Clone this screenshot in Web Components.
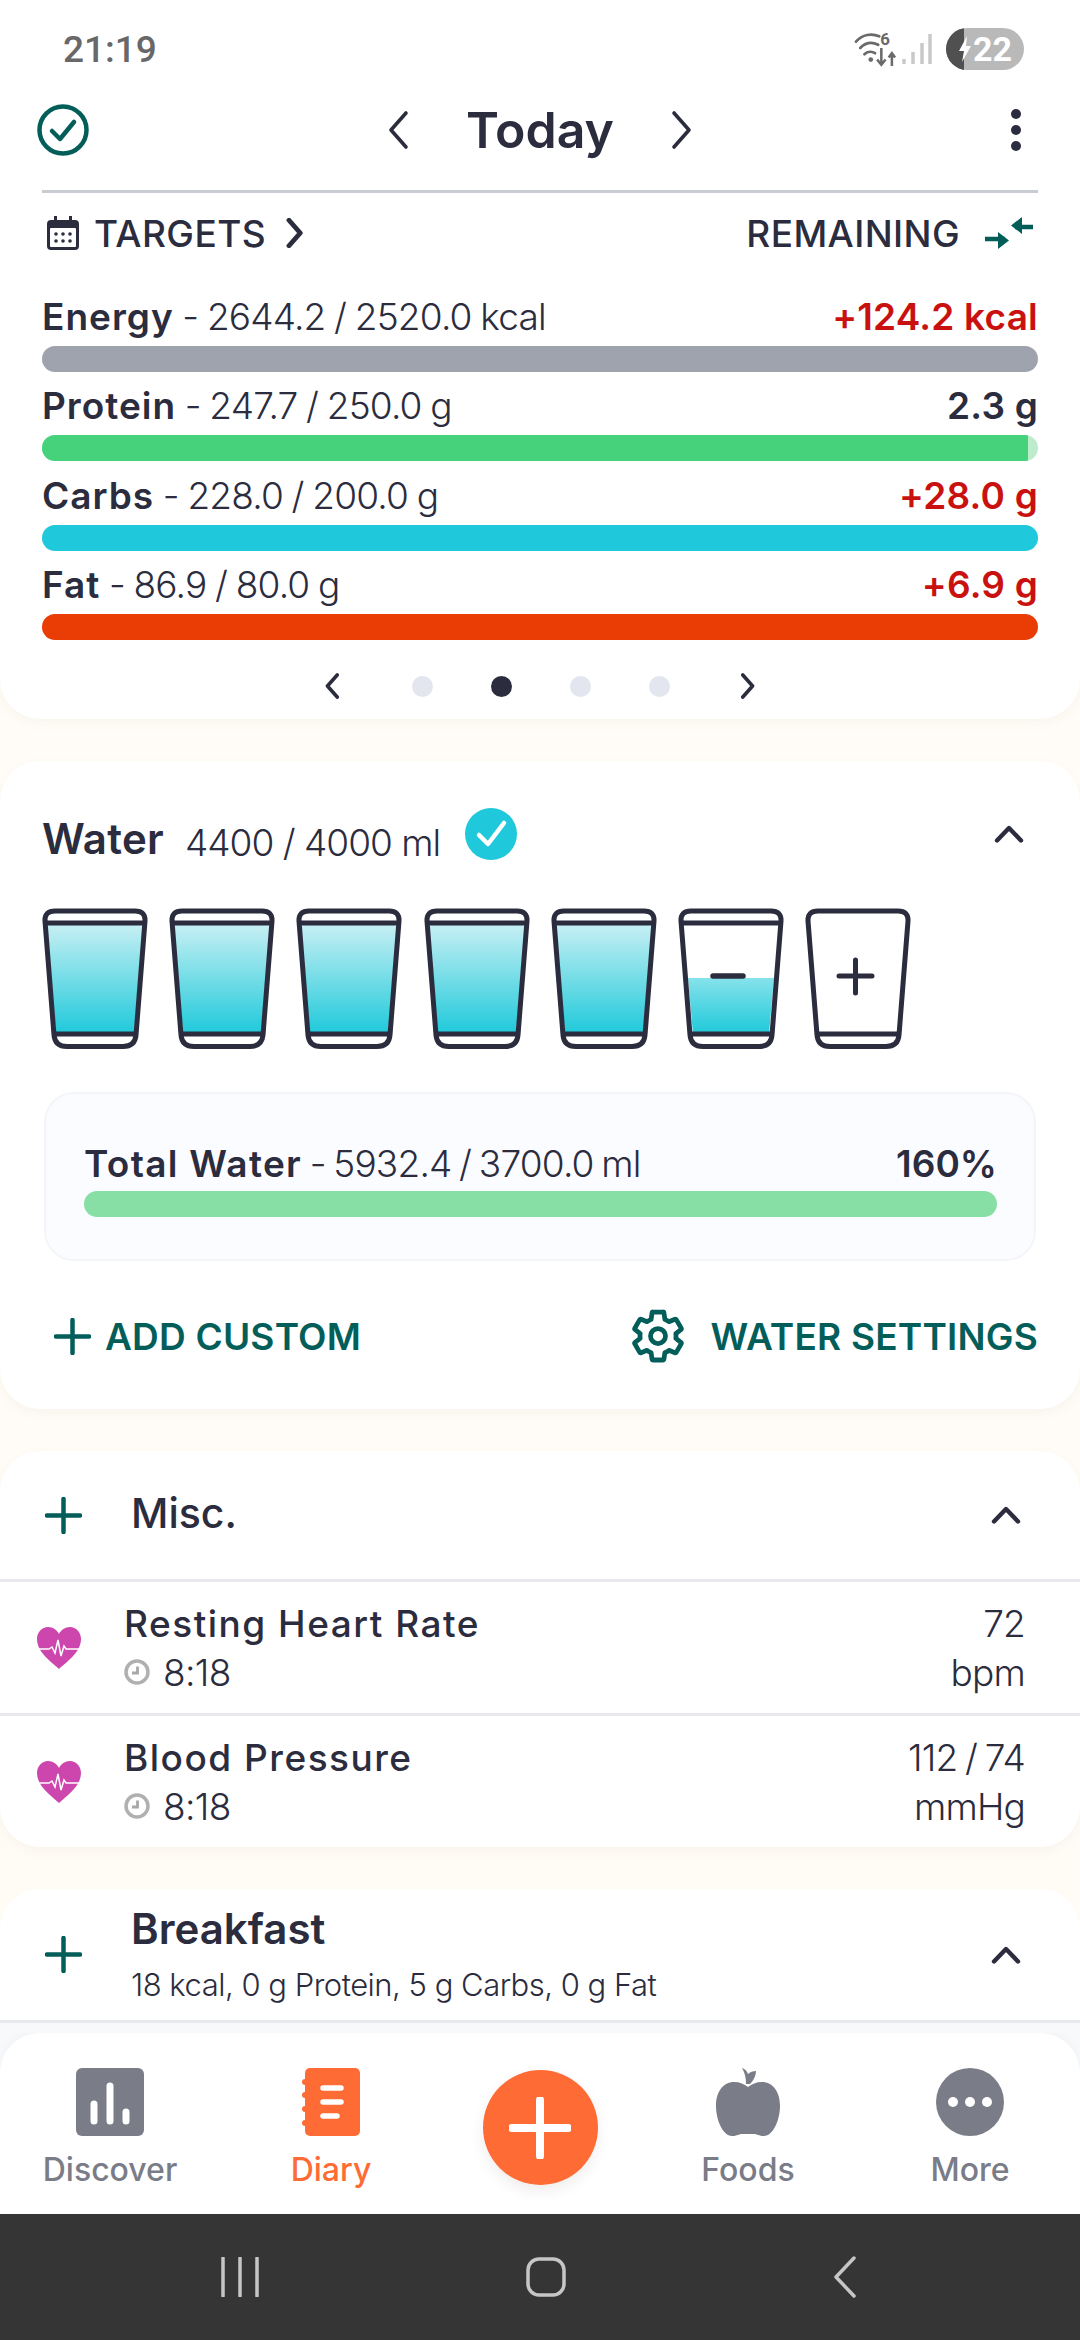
<!DOCTYPE html>
<html>
<head>
<meta charset="utf-8">
<title>Diary</title>
<style>
  html, body { margin: 0; height: 100%; overflow: hidden; }
  body { width: 1080px; height: 2340px; font-family: Inter, "Noto Sans", sans-serif; color: #2b2c3e; background: #f8f9fb; }
  app-main { height: 2033px; }
</style>
</head>
<body>
<app-main>
  <top-card>
    <status-bar></status-bar>
    <day-header></day-header>
    <targets-bar></targets-bar>
    <macro-row color="#9fa3ae" over><span slot="name">Energy</span><span slot="amount">2644.2 / 2520.0 kcal</span><span slot="left">+124.2 kcal</span></macro-row>
    <macro-row color="#46d27b" track="#bdeccd" pct="99"><span slot="name">Protein</span><span slot="amount">247.7 / 250.0 g</span><span slot="left">2.3 g</span></macro-row>
    <macro-row color="#1fc8da" over><span slot="name">Carbs</span><span slot="amount">228.0 / 200.0 g</span><span slot="left">+28.0 g</span></macro-row>
    <macro-row color="#ea3c05" over><span slot="name">Fat</span><span slot="amount">86.9 / 80.0 g</span><span slot="left">+6.9 g</span></macro-row>
    <page-dots></page-dots>
  </top-card>

  <water-card>
    <water-glass level="full"></water-glass>
    <water-glass level="full"></water-glass>
    <water-glass level="full"></water-glass>
    <water-glass level="full"></water-glass>
    <water-glass level="full"></water-glass>
    <water-glass level="half"></water-glass>
    <water-glass level="empty"></water-glass>
  </water-card>

  <diary-section title="Misc.">
    <diary-row time="8:18" value="72" unit="bpm">Resting Heart Rate</diary-row>
    <diary-row time="8:18" value="112 / 74" unit="mmHg">Blood Pressure</diary-row>
  </diary-section>

  <diary-section title="Breakfast" summary="18 kcal, 0 g Protein, 5 g Carbs, 0 g Fat"></diary-section>
</app-main>

<bottom-nav></bottom-nav>
<system-nav></system-nav>

<script>
const ICONS = {
  circleCheck: '<svg viewBox="0 0 52 52"><circle cx="26" cy="26" r="23.5" fill="none" stroke="#035e5a" stroke-width="4.5"/><path d="M15 27l8 8 14-17" fill="none" stroke="#035e5a" stroke-width="4.5" stroke-linecap="round" stroke-linejoin="round"/></svg>',
  left: '<svg viewBox="0 0 24 40"><path d="M20 3L5 20l15 17" fill="none" stroke="currentColor" style="stroke-width:var(--sw,3.6)" stroke-linecap="round" stroke-linejoin="round"/></svg>',
  right: '<svg viewBox="0 0 24 40"><path d="M4 3l15 17L4 37" fill="none" stroke="currentColor" style="stroke-width:var(--sw,3.6)" stroke-linecap="round" stroke-linejoin="round"/></svg>',
  up: '<svg viewBox="0 0 30 18"><path d="M3 15.5L15 3l12 12.5" fill="none" stroke="currentColor" stroke-width="4.4" stroke-linecap="round" stroke-linejoin="round"/></svg>',
  kebab: '<svg viewBox="0 0 12 44"><circle cx="6" cy="6" r="5"/><circle cx="6" cy="22" r="5"/><circle cx="6" cy="38" r="5"/></svg>',
  calendar: '<svg viewBox="0 0 32 34"><path fill="#2b2c3e" d="M7 0h3v4h12V0h3v4h3a4 4 0 0 1 4 4v22a4 4 0 0 1-4 4H4a4 4 0 0 1-4-4V8a4 4 0 0 1 4-4h3z"/><rect x="3" y="12" width="26" height="19" rx="1" fill="#fff"/><g fill="#2b2c3e"><circle cx="9" cy="18" r="1.8"/><circle cx="16" cy="18" r="1.8"/><circle cx="23" cy="18" r="1.8"/><circle cx="9" cy="25" r="1.8"/><circle cx="16" cy="25" r="1.8"/><circle cx="23" cy="25" r="1.8"/></g></svg>',
  swap: '<svg viewBox="0 0 48 32"><path fill="none" stroke="#035e5a" stroke-width="4.5" d="M48 10H30M0 22h20"/><path fill="#035e5a" d="M37 0v17l-11-8.500zM13 15v17l11-8.500z"/></svg>',
  badge: '<svg viewBox="0 0 52 52"><circle cx="26" cy="26" r="26" fill="#1fc8da"/><path d="M14 27l9 9 16-21" fill="none" stroke="#fff" stroke-width="4.500" stroke-linecap="round" stroke-linejoin="round"/></svg>',
  plus: '<svg viewBox="0 0 37 37"><path d="M18.500 2v33M2 18.500h33" fill="none" stroke="#035e5a" stroke-width="4.500" stroke-linecap="round"/></svg>',
  gear: '<svg viewBox="0 0 24 24"><path fill="none" stroke="#035e5a" stroke-width="1.900" stroke-linejoin="round" d="M19.140 12.940c.04-.3.060-.61.060-.94 0-.32-.02-.64-.07-.94l2.030-1.580a.49.49 0 0 0 .12-.61l-1.920-3.320a.49.49 0 0 0-.59-.22l-2.390.96a7 7 0 0 0-1.620-.94l-.36-2.540a.48.48 0 0 0-.48-.41h-3.840a.47.47 0 0 0-.47.41l-.36 2.540a7.400 7.400 0 0 0-1.620.94l-2.390-.96a.49.49 0 0 0-.59.22L2.740 8.870a.47.47 0 0 0 .12.61l2.030 1.580c-.05.3-.09.63-.09.94s.02.64.07.94l-2.030 1.580a.49.49 0 0 0-.12.61l1.920 3.320c.12.22.37.29.59.22l2.390-.96c.5.38 1.030.7 1.620.94l.36 2.540c.05.24.24.41.48.41h3.840c.24 0 .44-.17.47-.41l.36-2.540a7 7 0 0 0 1.620-.94l2.390.96c.22.08.47 0 .59-.22l1.920-3.320a.49.49 0 0 0-.12-.61z"/><circle cx="12" cy="12" r="3" fill="none" stroke="#035e5a" stroke-width="1.900"/></svg>',
  heart: '<svg viewBox="0 0 44 42"><path fill="#cc46ad" d="M22 42C16 36 0 26 0 12 0 5 5 0 11 0c5 0 9 3 11 7 2-4 6-7 11-7 6 0 11 5 11 12 0 14-16 24-22 30z"/><path fill="none" stroke="#fff" stroke-width="1.500" d="M2 22h10l3-2 3 6 3-13 3 16 3-10 2 3h13"/></svg>',
  clock: '<svg viewBox="0 0 26 26"><circle cx="13" cy="13" r="11" fill="none" stroke="#b0b0b0" stroke-width="3.500"/><path d="M13.500 7.500V14H8" fill="none" stroke="#a8a8a8" stroke-width="2.800"/></svg>',
  discover: '<svg viewBox="0 0 68 68"><rect width="68" height="68" rx="6" fill="#7a7c87"/><g stroke="#fff" stroke-width="7" stroke-linecap="round"><path d="M18 36v17M34 18v35M50 44v9"/></g></svg>',
  diary: '<svg viewBox="0 0 58 68"><rect x="3" width="55" height="68" rx="5" fill="#ff6b35"/><g fill="#ff6b35"><circle cx="3" cy="14" r="3"/><circle cx="3" cy="27" r="3"/><circle cx="3" cy="41" r="3"/><circle cx="3" cy="55" r="3"/></g><g stroke="#fff" stroke-width="5.500" stroke-linecap="round"><path d="M21 20h18M21 34h18M21 48h14"/></g></svg>',
  apple: '<svg viewBox="0 0 64 68"><path fill="#7a7c87" d="M32 19c-4-3-8-5-14-5C7 14 0 24 0 38c0 14 7 30 16 30 5 0 7-2 10-2h12c3 0 5 2 10 2 9 0 16-16 16-30 0-14-7-24-18-24-6 0-10 2-14 5z"/><path fill="#7a7c87" d="M26 0c3 1 5 3 6 6 2-2 5-3 8-3 0 5-3 10-6 13h-4c0-6-1-11-4-16z"/></svg>',
  more: '<svg viewBox="0 0 68 68"><circle cx="34" cy="34" r="34" fill="#7a7c87"/><g fill="#fff"><circle cx="17" cy="34" r="5"/><circle cx="34" cy="34" r="5"/><circle cx="51" cy="34" r="5"/></g></svg>',
  fab: '<svg viewBox="0 0 62 62"><path d="M31 3v56M3 31h56" fill="none" stroke="#fff" stroke-width="8" stroke-linecap="round"/></svg>'
};

class AppIcon extends HTMLElement {
  constructor() {
    super();
    this.attachShadow({ mode: 'open' });
    const w = this.getAttribute('w');
    const h = this.getAttribute('h') || w;
    this.shadowRoot.innerHTML = `<style>
      :host { display: block; flex: none; width: ${w}px; height: ${h}px; fill: currentColor; }
      svg { display: block; width: 100%; height: 100%; }
    </style>${ICONS[this.getAttribute('name')]}`;
  }
}
customElements.define('app-icon', AppIcon);

class AppMain extends HTMLElement {
  constructor() {
    super();
    this.attachShadow({ mode: 'open' });
    this.shadowRoot.innerHTML = `<style>
      :host { display: flex; flex-direction: column; gap: 42px; overflow: hidden; background: linear-gradient(#fffdf8, #fffcf6); }
    </style><slot></slot>`;
  }
}
customElements.define('app-main', AppMain);

class TopCard extends HTMLElement {
  constructor() {
    super();
    this.attachShadow({ mode: 'open' });
    this.shadowRoot.innerHTML = `<style>
      :host { display: block; flex: none; height: 719px; box-sizing: border-box; background: #fff; border-radius: 0 0 40px 40px; box-shadow: 0 4px 12px rgba(120,100,60,.05); }
    </style><slot></slot>`;
  }
}
customElements.define('top-card', TopCard);

class StatusBar extends HTMLElement {
  constructor() {
    super();
    this.attachShadow({ mode: 'open' });
    this.shadowRoot.innerHTML = `<style>
      :host { display: flex; align-items: center; height: 98px; padding: 0 56px 0 63px; box-sizing: border-box; }
      .time { font: 500 37px Roboto, sans-serif; color: #686868; flex: 1; }
      .icons { display: flex; align-items: center; }
      .pill { display: flex; align-items: center; width: 78px; height: 42px; border-radius: 21px; overflow: hidden; background: #b9b9b9; color: #fff; font: 700 34px Roboto, sans-serif; margin-left: 13px; }
      .bolt { width: 18px; height: 42px; background: #505050; flex: none; display: flex; align-items: center; justify-content: flex-end; }
      .num { margin-left: 9px; }
    </style>
    <div class="time">21:19</div>
    <div class="icons">
      <svg width="44" height="38" viewBox="0 0 40 36">
        <g fill="none" stroke="#6a6a6a" stroke-width="2.600" stroke-linecap="round"><path d="M2 11C8 4 17 3 24 6M6 17c5-5 11-6 17-3M10 23c3-3 7-3 10-1"/></g>
        <circle cx="16" cy="28" r="2.200" fill="#6a6a6a"/>
        <text x="25" y="14" font-family="Roboto" font-weight="700" font-size="16" fill="#6a6a6a">6</text>
        <path d="M26 17v15M22 28l4 5 4-5M36 34V22M33 26l3-4 3 4" fill="none" stroke="#6a6a6a" stroke-width="2.400"/>
      </svg>
      <svg width="32" height="32" viewBox="0 0 32 32" style="margin-left:4px"><g stroke="#c9c9c9" stroke-width="3.500"><path d="M3 26v5M12 19v12M21 10v21M29 1v30"/></g></svg>
      <div class="pill"><div class="bolt"><svg width="14" height="26" viewBox="0 0 14 26" style="margin-right:-8px"><path d="M9 0L1 15h5l-2 11 9-16H8z" fill="#fff"/></svg></div><span class="num">22</span></div>
    </div>`;
  }
}
customElements.define('status-bar', StatusBar);

class DayHeader extends HTMLElement {
  constructor() {
    super();
    this.attachShadow({ mode: 'open' });
    this.shadowRoot.innerHTML = `<style>
      :host { display: block; }
      .row { display: grid; grid-template-columns: 1fr auto 1fr; align-items: center; height: 64px; padding: 0 37px; }
      .center { display: flex; align-items: center; gap: 55px; }
      .kebab { justify-self: end; margin-right: 21px; }
      .title { font-size: 50px; font-weight: 600; width: 150px; text-align: center; white-space: nowrap; }
      hr { border: 0; margin: 28px 42px 0; height: 3px; background: #c9ccd3; }
    </style>
    <div class="row">
      <app-icon name="circleCheck" w="52"></app-icon>
      <div class="center">
        <app-icon name="left" w="24" h="40"></app-icon>
        <div class="title">Today</div>
        <app-icon name="right" w="24" h="40"></app-icon>
      </div>
      <app-icon class="kebab" name="kebab" w="12" h="44"></app-icon>
    </div>
    <hr>`;
  }
}
customElements.define('day-header', DayHeader);

class TargetsBar extends HTMLElement {
  constructor() {
    super();
    this.attachShadow({ mode: 'open' });
    this.shadowRoot.innerHTML = `<style>
      :host { display: flex; align-items: center; height: 80px; padding: 0 47px; margin-bottom: 15px; font-size: 37px; font-weight: 500; letter-spacing: .4px; }
      .l, .r { display: flex; align-items: center; }
      .l { flex: 1; }
      .l span { margin: 0 20px 0 15px; }
      .r span { margin-right: 25px; }
    </style>
    <div class="l"><app-icon name="calendar" w="32" h="34"></app-icon><span>TARGETS</span><app-icon name="right" w="18" h="30" style="--sw:6.500"></app-icon></div>
    <div class="r"><span>REMAINING</span><app-icon name="swap" w="48" h="32"></app-icon></div>`;
  }
}
customElements.define('targets-bar', TargetsBar);

class MacroRow extends HTMLElement {
  constructor() {
    super();
    this.attachShadow({ mode: 'open' });
    const pct = this.getAttribute('pct') || 100;
    this.shadowRoot.innerHTML = `<style>
      :host { display: block; height: 89.33px; padding: 0 42px; font-size: 37px; }
      .text { display: flex; justify-content: space-between; height: 58px; line-height: 58px; white-space: nowrap; }
      .name { font-weight: 600; letter-spacing: 1px; }
      .amount { font-weight: 300; letter-spacing: -.8px; word-spacing: -1px; }
      .left { font-weight: 600; letter-spacing: .2px; color: ${this.hasAttribute('over') ? '#c9120f' : 'inherit'}; }
      .bar { height: 26px; border-radius: 13px; overflow: hidden; background: ${this.getAttribute('track') || this.getAttribute('color')}; }
      .fill { height: 100%; width: ${pct}%; background: ${this.getAttribute('color')}; }
    </style>
    <div class="text">
      <div><span class="name"><slot name="name"></slot></span><span class="amount"> - <slot name="amount"></slot></span></div>
      <div class="left"><slot name="left"></slot></div>
    </div>
    <div class="bar"><div class="fill"></div></div>`;
  }
}
customElements.define('macro-row', MacroRow);

class PageDots extends HTMLElement {
  constructor() {
    super();
    this.attachShadow({ mode: 'open' });
    this.shadowRoot.innerHTML = `<style>
      :host { display: flex; align-items: center; justify-content: center; height: 40px; margin-top: 21px; color: #2b2c3e; }
      .dots { display: flex; gap: 58px; margin: 0 70.500px 0 71.500px; }
      i { display: block; width: 21px; height: 21px; border-radius: 50%; background: #e3e6ee; }
      i.on { background: #2b2c3e; }
    </style>
    <app-icon name="left" w="16" h="26" style="--sw:5.500"></app-icon>
    <div class="dots"><i></i><i class="on"></i><i></i><i></i></div>
    <app-icon name="right" w="16" h="26" style="--sw:5.500"></app-icon>`;
  }
}
customElements.define('page-dots', PageDots);

class WaterGlass extends HTMLElement {
  constructor() {
    super();
    this.attachShadow({ mode: 'open' });
    const level = this.getAttribute('level');
    const id = 'g' + level;
    let water = '';
    let mark = '';
    if (level === 'full') {
      water = `<defs><linearGradient id="${id}" x1="0" y1="0" x2="0" y2="1"><stop offset="0" stop-color="#c9f0f4"/><stop offset="1" stop-color="#1fc9da"/></linearGradient></defs><path d="M5 15h96l-9 111H14z" fill="url(#${id})"/>`;
    } else if (level === 'half') {
      water = `<defs><linearGradient id="${id}" x1="0" y1="0" x2="0" y2="1"><stop offset="0" stop-color="#86e2eb"/><stop offset="1" stop-color="#1fc9da"/></linearGradient></defs><path d="M10 70h86l-5 56H15z" fill="url(#${id})"/>`;
      mark = '<path d="M35 68h30" stroke="#2b2c3e" stroke-width="5.500" stroke-linecap="round"/>';
    } else {
      mark = '<path d="M34 68h33M50.500 52v33" stroke="#2b2c3e" stroke-width="5" stroke-linecap="round"/>';
    }
    const band = level === 'empty' ? '' : '<path d="M4 15h98" stroke="#2b2c3e" stroke-width="5"/>';
    this.shadowRoot.innerHTML = `<style>
      :host { display: block; width: 106px; height: 141px; flex: none; }
      svg { display: block; }
    </style>
    <svg width="106" height="141" viewBox="0 0 106 141">
      ${water}${band}
      <path d="M13 3H93Q103.500 3 103 13L94 127Q93 138.500 81 138.500H25Q13 138.500 12 127L3 13Q2.500 3 13 3Z" fill="none" stroke="#2b2c3e" stroke-width="5"/>
      <path d="M12 126h82" stroke="#2b2c3e" stroke-width="5"/>
      ${mark}
    </svg>`;
  }
}
customElements.define('water-glass', WaterGlass);

class WaterCard extends HTMLElement {
  constructor() {
    super();
    this.attachShadow({ mode: 'open' });
    this.shadowRoot.innerHTML = `<style>
      :host { display: block; flex: none; height: 648px; box-sizing: border-box; padding-top: 36px; background: #fff; border-radius: 40px; box-shadow: 0 4px 12px rgba(120,100,60,.05); }
      .head { display: flex; align-items: center; height: 74px; padding: 0 56px 0 42px; }
      .title { font-size: 42px; font-weight: 600; letter-spacing: .3px; margin-top: 8px; }
      .amount { font-size: 37px; font-weight: 300; margin: 17px 25px 0 21px; letter-spacing: -1px; white-space: nowrap; }
      .head app-icon[name=up] { margin-left: auto; color: #2b2c3e; }
      .glasses { display: flex; gap: 21.200px; padding: 0 42px; margin-top: 37px; }
      .panel { box-sizing: border-box; height: 169px; margin: 43px 44px 0 44px; padding: 42px 37px 0 38px; background: #fbfcff; border: 2px solid #f4f5f8; border-radius: 30px; }
      .ptext { display: flex; justify-content: space-between; height: 55px; line-height: 56px; font-size: 37px; white-space: nowrap; }
      .ptext b { font-weight: 600; letter-spacing: 1.300px; }
      .ptext b:last-child { letter-spacing: 0; }
      .ptext span { font-weight: 300; letter-spacing: -.8px; word-spacing: -2px; }
      .pbar { height: 26px; border-radius: 13px; background: #88dfa5; }
      .actions { display: flex; justify-content: space-between; align-items: center; height: 60px; margin-top: 45px; padding: 0 42px 0 54px; color: #035e5a; font-size: 37px; font-weight: 600; letter-spacing: .2px; white-space: nowrap; }
      .action { display: flex; align-items: center; }
    </style>
    <div class="head">
      <div class="title">Water</div><div class="amount">4400 / 4000 ml</div>
      <app-icon name="badge" w="52"></app-icon>
      <app-icon name="up" w="30" h="18"></app-icon>
    </div>
    <div class="glasses"><slot></slot></div>
    <div class="panel">
      <div class="ptext"><div><b>Total Water</b><span> - 5932.4 / 3700.0 ml</span></div><b>160%</b></div>
      <div class="pbar"></div>
    </div>
    <div class="actions">
      <div class="action"><app-icon name="plus" w="37"></app-icon><span style="margin-left:14px">ADD CUSTOM</span></div>
      <div class="action"><app-icon name="gear" w="60"></app-icon><span style="margin-left:23px">WATER SETTINGS</span></div>
    </div>`;
  }
}
customElements.define('water-card', WaterCard);

class DiarySection extends HTMLElement {
  constructor() {
    super();
    this.attachShadow({ mode: 'open' });
    const summary = this.getAttribute('summary');
    this.shadowRoot.innerHTML = `<style>
      :host { display: block; flex: none; background: #fff; border-radius: 40px; box-shadow: 0 4px 12px rgba(120,100,60,.05); overflow: hidden; }
      :host([summary]) { flex: 1 0 auto; border-radius: 40px 40px 0 0; background: linear-gradient(#fff 134px, #f8f9fb 134px); box-shadow: none; }
      .head { display: flex; align-items: center; box-sizing: border-box; height: 128px; padding: 0 59px 0 45px; color: #2b2c3e; }
      :host([summary]) .head { height: 131px; padding-top: 6px; }
      :host([summary]) .head app-icon { margin-top: -6px; }
      .text { flex: 1; margin-left: 49px; white-space: nowrap; }
      .title { font-size: ${summary ? 42 : 41}px; font-weight: ${summary ? 600 : 500}; line-height: 50px; margin-top: -5px; }
      :host([summary]) .title { margin-top: -6px; }
      .sub { font-size: 31px; font-weight: 300; letter-spacing: -.5px; line-height: 42px; margin-top: 10px; }
      .rows ::slotted(diary-row) { border-top: 3px solid #e8e9ec; }
      hr { border: 0; height: 3px; margin: 0; background: #e8e9ec; }
    </style>
    <div class="head">
      <app-icon name="plus" w="37"></app-icon>
      <div class="text"><div class="title">${this.getAttribute('title')}</div>${summary ? `<div class="sub">${summary}</div>` : ''}</div>
      <app-icon name="up" w="30" h="18"></app-icon>
    </div>
    ${summary ? '<hr>' : ''}
    <div class="rows"><slot></slot></div>`;
  }
}
customElements.define('diary-section', DiarySection);

class DiaryRow extends HTMLElement {
  constructor() {
    super();
    this.attachShadow({ mode: 'open' });
    this.shadowRoot.innerHTML = `<style>
      :host { display: flex; align-items: center; box-sizing: content-box; height: 131px; padding: 0 55px 0 37px; font-size: 37px; white-space: nowrap; }
      .main { flex: 1; margin-left: 43px; }
      .line { height: 49px; line-height: 49px; }
      .name { font-weight: 500; letter-spacing: 1.500px; }
      .time { display: flex; align-items: center; font-weight: 300; gap: 13px; letter-spacing: -.6px; }
      .value { text-align: right; font-weight: 300; letter-spacing: -.8px; word-spacing: -2px; }
    </style>
    <app-icon name="heart" w="44" h="42"></app-icon>
    <div class="main">
      <div class="line name"><slot></slot></div>
      <div class="line time"><app-icon name="clock" w="26"></app-icon>${this.getAttribute('time')}</div>
    </div>
    <div class="value">
      <div class="line">${this.getAttribute('value')}</div>
      <div class="line">${this.getAttribute('unit')}</div>
    </div>`;
  }
}
customElements.define('diary-row', DiaryRow);

class TabItem extends HTMLElement {
  constructor() {
    super();
    this.attachShadow({ mode: 'open' });
    const w = this.getAttribute('w');
    this.shadowRoot.innerHTML = `<style>
      :host { display: flex; flex-direction: column; align-items: center; width: 180px; flex: none; color: ${this.hasAttribute('active') ? '#ff6b35' : '#7a7c87'}; font-size: 32px; font-weight: 500; }
      .label { margin-top: 12px; line-height: 44px; }
    </style>
    <app-icon name="${this.getAttribute('icon')}" w="${w}" h="68"></app-icon>
    <div class="label"><slot></slot></div>`;
  }
}
customElements.define('tab-item', TabItem);

class BottomNav extends HTMLElement {
  constructor() {
    super();
    this.attachShadow({ mode: 'open' });
    this.shadowRoot.innerHTML = `<style>
      :host { display: flex; box-sizing: border-box; height: 181px; padding: 35px 20px 0; background: #fff; border-radius: 40px 40px 0 0; box-shadow: 0 -4px 10px rgba(40,50,80,.03); }
      .diary { margin-left: 41px; }
      .foods { margin-left: 60.500px; }
      .more { margin-left: 42px; }
      .fab { width: 115px; height: 115px; flex: none; margin: 2px 0 0 61.500px; border-radius: 50%; background: #ff6b35; display: flex; align-items: center; justify-content: center; box-shadow: 0 6px 14px rgba(60,30,10,.08); }
    </style>
    <tab-item icon="discover" w="68">Discover</tab-item>
    <tab-item class="diary" icon="diary" w="58" active>Diary</tab-item>
    <div class="fab"><app-icon name="fab" w="62"></app-icon></div>
    <tab-item class="foods" icon="apple" w="64">Foods</tab-item>
    <tab-item class="more" icon="more" w="68">More</tab-item>`;
  }
}
customElements.define('bottom-nav', BottomNav);

class SystemNav extends HTMLElement {
  constructor() {
    super();
    this.attachShadow({ mode: 'open' });
    this.shadowRoot.innerHTML = `<style>
      :host { display: flex; justify-content: space-between; align-items: center; height: 126px; box-sizing: border-box; padding: 0 224px 0 221px; background: #353535; }
    </style>
    <svg width="38" height="40" viewBox="0 0 38 40"><path d="M2 1v38M19 1v38M36 1v38" stroke="#c6c6c6" stroke-width="3.500" stroke-linecap="round"/></svg>
    <svg width="40" height="40" viewBox="0 0 40 40"><rect x="2" y="2" width="36" height="36" rx="11" fill="none" stroke="#c6c6c6" stroke-width="3.500"/></svg>
    <svg width="23" height="42" viewBox="0 0 23 42"><path d="M21 2L3 21l18 19" fill="none" stroke="#c6c6c6" stroke-width="3.500" stroke-linecap="round" stroke-linejoin="round"/></svg>`;
  }
}
customElements.define('system-nav', SystemNav);
</script>
</body>
</html>
